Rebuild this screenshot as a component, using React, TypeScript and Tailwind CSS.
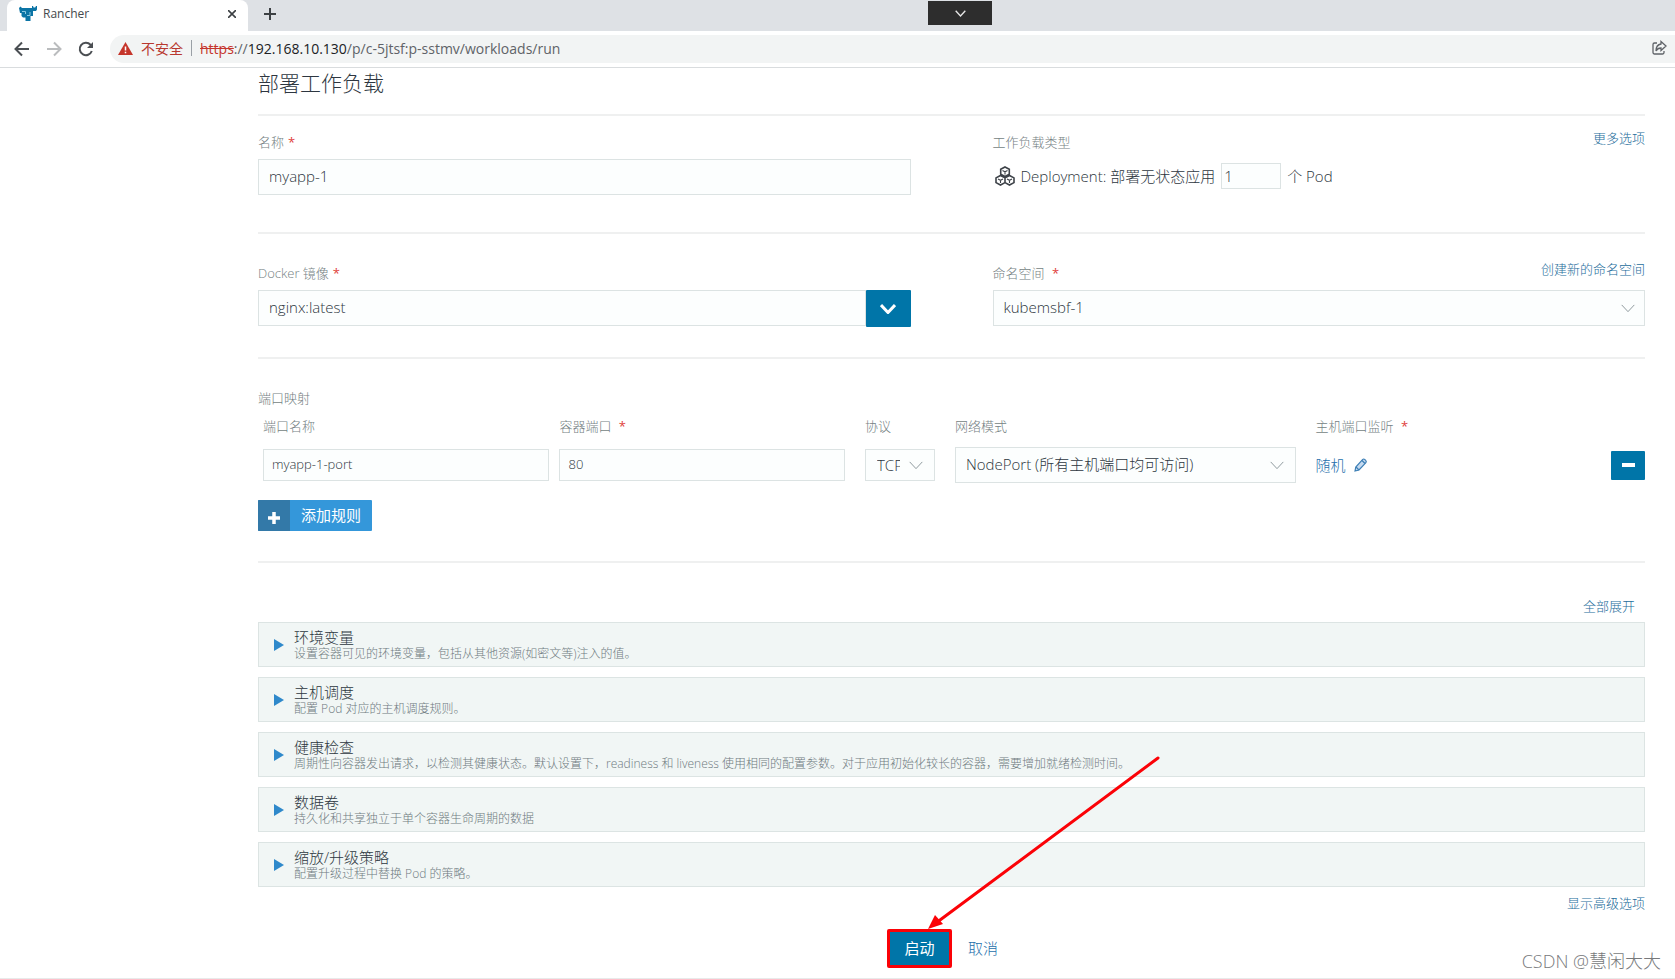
import { useState } from "react";
import type { ReactNode } from "react";

const sections = [
  { title: "环境变量", text: "设置容器可见的环境变量，包括从其他资源(如密文等)注入的值。" },
  { title: "主机调度", text: "配置 Pod 对应的主机调度规则。" },
  {
    title: "健康检查",
    text: "周期性向容器发出请求，以检测其健康状态。默认设置下，readiness 和 liveness 使用相同的配置参数。对于应用初始化较长的容器，需要增加就绪检测时间。",
  },
  { title: "数据卷", text: "持久化和共享独立于单个容器生命周期的数据" },
  { title: "缩放/升级策略", text: "配置升级过程中替换 Pod 的策略。" },
];

function Chevron({ className }: { className: string }) {
  return (
    <svg className={className} viewBox="0 0 16 10" fill="none" stroke="currentColor" aria-hidden="true">
      <path d="M1 1l7 7.5L15 1" />
    </svg>
  );
}

function Label({ htmlFor, required, children }: { htmlFor?: string; required?: boolean; children: ReactNode }) {
  return (
    <label htmlFor={htmlFor} className="flex gap-1 text-[13px] leading-[18px] text-[#757f83]">
      {children}
      {required && <span className="font-normal text-[#e0403a]">*</span>}
    </label>
  );
}

function BrowserBar() {
  return (
    <header className="font-normal">
      <div className="relative flex h-[31px] items-end bg-[#dee1e5] pl-[7px]">
        <div className="flex h-full w-[241px] items-center rounded-t-lg bg-white pr-2 pb-1 pl-3 text-[12px] text-[#45494d]">
          <svg className="mr-1.5 h-[18px] w-[18px]" viewBox="0 0 18 18" aria-hidden="true">
            <path
              d="M0 3l1.500-1.500L3 3h10V1h1l.6 1.600h1.600L17 1h1v3.500L17 6h-3v5h-2.500v5h-5v-3.500H4L2.500 11V8H1z"
              fill="#0b74a5"
            />
            <path d="M3 6.500h3.500V9M11 7v3.500H8" fill="none" stroke="#8ac6df" />
          </svg>
          <span className="flex-1">Rancher</span>
          <button aria-label="关闭标签页" className="p-1">
            <svg className="h-2 w-2" viewBox="0 0 8 8" stroke="#3c4043" strokeWidth="1.6" aria-hidden="true">
              <path d="M0 0l8 8M8 0L0 8" />
            </svg>
          </button>
        </div>
        <button aria-label="新标签页" className="ml-4 flex h-full items-center pb-1">
          <svg className="h-3 w-3" viewBox="0 0 12 12" stroke="#3c4043" strokeWidth="2" aria-hidden="true">
            <path d="M6 0v12M0 6h12" />
          </svg>
        </button>
        <button
          aria-label="展开"
          className="absolute top-px left-[928px] flex h-6 w-16 items-center justify-center bg-[#2d2d2d] text-[#e6e6e6]"
        >
          <Chevron className="h-[7px] w-[11px] stroke-2" />
        </button>
      </div>
      <div className="flex h-[37px] items-center border-b border-[#d9dcde] pl-3.5 text-[#5f6368]">
        <button aria-label="后退">
          <svg className="h-4 w-4" viewBox="0 0 16 16" fill="none" stroke="#4b4f53" strokeWidth="2" aria-hidden="true">
            <path d="M15 8H2M8 1.500L1.500 8 8 14.500" />
          </svg>
        </button>
        <button aria-label="前进" className="ml-4">
          <svg className="h-4 w-4" viewBox="0 0 16 16" fill="none" stroke="#babcbe" strokeWidth="2" aria-hidden="true">
            <path d="M1 8h13M8 1.500L14.500 8 8 14.500" />
          </svg>
        </button>
        <button aria-label="重新加载" className="ml-4">
          <svg className="h-4 w-4" viewBox="0 0 16 16" fill="none" stroke="#4b4f53" strokeWidth="2" aria-hidden="true">
            <path d="M13.800 10A6.200 6.200 0 1 1 12.500 3.700L14 5.500" />
            <path d="M15 1v6H9z" fill="#4b4f53" stroke="none" />
          </svg>
        </button>
        <div className="ml-4 flex h-7 flex-1 items-center rounded-l-full bg-[#f2f4f4] pr-2 pb-0.5 pl-2 text-[14px]">
          <svg className="mr-2 h-[13px] w-[15px]" viewBox="0 0 15 13" aria-hidden="true">
            <path d="M7.500 0L15 13H0z" fill="#c5352b" />
            <path d="M7.500 4.500v4M7.500 9.800v1.400" stroke="#fff" strokeWidth="1.500" />
          </svg>
          <span className="text-[#b8382f]">不安全</span>
          <span className="mx-2 h-4 w-px bg-[#9aa0a6]" />
          <span className="flex-1">
            <span className="text-[#c5352b] line-through">https</span>://
            <span className="text-[#202124]">192.168.10.130</span>/p/c-5jtsf:p-sstmv/workloads/run
          </span>
          <button aria-label="分享">
            <svg className="h-4 w-4" viewBox="0 0 16 16" fill="none" stroke="#5f6368" strokeWidth="1.300" aria-hidden="true">
              <path d="M6 3H3.500A1.500 1.500 0 0 0 2 4.500v8A1.500 1.500 0 0 0 3.500 14h8a1.500 1.500 0 0 0 1.500-1.500V11" />
              <path d="M10 1.500L15 6l-5 4.500V8C7.500 8 6 9 5 11c0-4 2-6.500 5-7z" />
            </svg>
          </button>
        </div>
      </div>
    </header>
  );
}

const box = "w-full border border-[#dce3e3] bg-[#fcfefe] pb-0.5 outline-none";

export default function App() {
  const [name, setName] = useState("myapp-1");
  const [replicas, setReplicas] = useState("1");
  const [image, setImage] = useState("nginx:latest");
  const [portName, setPortName] = useState("myapp-1-port");
  const [port, setPort] = useState("80");

  return (
    <div className="relative min-h-screen border-b border-[#e8eaea] bg-white font-['Open_Sans','Noto_Sans_CJK_SC',sans-serif] text-[15px] font-light text-[#2d3640]">
      <BrowserBar />

      <main className="mr-[30px] ml-[258px]">
        <h1 className="h-[46px] text-[21px] leading-[30px]">部署工作负载</h1>

        <section className="grid grid-cols-2 gap-x-[82px] border-t-2 border-[#eff0f0] pt-[17px] pb-[37px]">
          <div>
            <Label htmlFor="name" required>名称</Label>
            <input id="name" className={`${box} mt-2 h-9 px-2.5`} value={name} onChange={(e) => setName(e.target.value)} />
          </div>
          <div>
            <div className="flex justify-between text-[13px] leading-[18px]">
              <h2 className="text-[#757f83]">工作负载类型</h2>
              <a href="#more" className="-mt-1 text-[#256d9b]">更多选项</a>
            </div>
            <div className="mt-3 flex h-[26px] items-center">
              <svg className="mx-0.5 h-5 w-5" viewBox="0 0 20 20" fill="none" stroke="#3d4248" strokeWidth="1.600" aria-hidden="true">
                <path d="M10 1l4.300 2.300v4.900L10 10.500 5.700 8.200V3.300zM5.500 9.500l4.500 2.400v4.700l-4.500 2.400-4.500-2.400v-4.700zM14.500 9.500l4.500 2.400v4.700l-4.500 2.400-4.500-2.400v-4.700z" />
                <path d="M7.500 4.500L10 5.800l2.500-1.300M10 5.800v2.700M3 13l2.500 1.300L8 13M5.500 14.300V17M12 13l2.500 1.300L17 13M14.500 14.300V17" strokeWidth="1.100" />
              </svg>
              <label htmlFor="replicas" className="ml-1">Deployment: 部署无状态应用</label>
              <input
                id="replicas"
                className="mx-1.5 h-[26px] w-[60px] border border-[#dce3e3] bg-[#fcfefe] px-0.5 outline-none"
                value={replicas}
                onChange={(e) => setReplicas(e.target.value)}
              />
              <span>个 Pod</span>
            </div>
          </div>
        </section>

        <section className="grid grid-cols-2 gap-x-[82px] border-t-2 border-[#eff0f0] pt-[30px] pb-[30px]">
          <div>
            <Label htmlFor="image" required>Docker 镜像</Label>
            <div className="mt-2 flex h-[37px]">
              <input id="image" className={`${box} h-9 px-2.5`} value={image} onChange={(e) => setImage(e.target.value)} />
              <button aria-label="选择镜像" className="flex w-[45px] shrink-0 items-center justify-center rounded-[1px] bg-[#0075a8] text-white">
                <Chevron className="h-[10px] w-4 stroke-3" />
              </button>
            </div>
          </div>
          <div>
            <div className="flex justify-between text-[13px] leading-[18px]">
              <Label htmlFor="namespace" required>命名空间&nbsp;</Label>
              <a href="#namespace" className="-mt-1 text-[#256d9b]">创建新的命名空间</a>
            </div>
            <div className="relative mt-2">
              <select id="namespace" className={`${box} h-9 appearance-none px-2.5`}>
                <option>kubemsbf-1</option>
              </select>
              <Chevron className="pointer-events-none absolute top-3.5 right-[9px] h-[9px] w-4 text-[#839094]" />
            </div>
          </div>
        </section>

        <section className="border-t-2 border-[#eff0f0] pt-[30px] pb-[30px]">
          <h2 className="text-[13px] leading-[18px] text-[#757f83]">端口映射</h2>
          <div className="mt-2.5 ml-[5px] grid grid-cols-[296fr_305fr_90px_360fr_295fr_34px] gap-y-3">
            <Label htmlFor="port-name">端口名称</Label>
            <Label htmlFor="port" required>容器端口&nbsp;</Label>
            <Label htmlFor="protocol">协议</Label>
            <Label htmlFor="mode">网络模式</Label>
            <Label required>主机端口监听&nbsp;</Label>
            <span />
            <div className="flex items-center pr-2.5">
              <input id="port-name" className={`${box} h-8 px-2 text-[13px]`} value={portName} onChange={(e) => setPortName(e.target.value)} />
            </div>
            <div className="flex items-center pr-5">
              <input id="port" className={`${box} h-8 px-2 text-[13px]`} value={port} onChange={(e) => setPort(e.target.value)} />
            </div>
            <div className="relative flex items-center pr-5">
              <select id="protocol" className="h-8 w-full appearance-none border border-[#dce3e3] bg-[#fcfefe] pr-[34px] pl-[11px] outline-none">
                <option>TCP</option>
                <option>UDP</option>
              </select>
              <Chevron className="pointer-events-none absolute right-[31px] h-[9px] w-4 text-[#839094]" />
            </div>
            <div className="relative flex items-center pr-5">
              <select id="mode" className={`${box} h-9 appearance-none px-2.5`}>
                <option>NodePort (所有主机端口均可访问)</option>
              </select>
              <Chevron className="pointer-events-none absolute right-[31px] h-[9px] w-4 text-[#839094]" />
            </div>
            <a href="#random" className="flex items-center gap-2 text-[#256fab]">
              随机
              <svg className="h-3.5 w-3.5" viewBox="0 0 14 14" fill="none" stroke="#3d7fb5" strokeWidth="1.200" aria-hidden="true">
                <path d="M1 13l.8-4L8.500 1.600q1.200-1.200 2.400 0l.8.800q1.200 1.200 0 2.400L5 12z" fill="#c5daf0" />
                <path d="M8 2.500l3 3M2 9l3 3" />
              </svg>
            </a>
            <div className="flex items-center">
              <button aria-label="删除规则" className="flex h-[29px] w-full items-center justify-center rounded-[1px] bg-[#0075a8]">
                <span className="h-1 w-[13px] bg-white" />
              </button>
            </div>
          </div>
          <button className="mt-[17px] flex h-[31px] items-center rounded-[1px] bg-[#3497da] font-normal text-white">
            <span className="flex h-full w-8 items-center justify-center rounded-l-[1px] bg-[#3379a8]">
              <svg className="mt-1 h-3 w-3" viewBox="0 0 12 12" stroke="#fff" strokeWidth="3.500" aria-hidden="true">
                <path d="M6 0v12M0 6h12" />
              </svg>
            </span>
            <span className="px-[11px]">添加规则</span>
          </button>
        </section>

        <section className="border-t-2 border-[#eff0f0] pt-[33px]">
          <div className="pr-[10px] text-right text-[13px] leading-5">
            <a href="#expand" className="text-[#256d9b]">全部展开</a>
          </div>
          <div className="mt-1.5 flex flex-col gap-2.5">
            {sections.map((s) => (
              <button key={s.title} className="flex h-[45px] items-center border border-[#dce4e3] bg-[#f1f6f5] pl-[15px] text-left">
                <svg className="mr-2.5 h-3 w-[10px]" viewBox="0 0 10 12" fill="#2f89cb" aria-hidden="true">
                  <path d="M0 0l10 6-10 6z" />
                </svg>
                <span>
                  <span className="block leading-[18px]">{s.title}</span>
                  <span className="block text-[12px] leading-4 text-[#6f7a7f]">{s.text}</span>
                </span>
              </button>
            ))}
          </div>
          <div className="mt-1.5 text-right text-[13px] leading-5">
            <a href="#advanced" className="text-[#256d9b]">显示高级选项</a>
          </div>
        </section>

        <footer className="mt-4 flex items-center justify-center gap-4 pr-[18px] pb-[9px]">
          <div className="relative">
            <button className="h-[39px] w-[65px] rounded-[2px] border-3 border-[#fb0207] bg-[#0075a8] font-normal text-white">启动</button>
            <svg className="pointer-events-none absolute bottom-full left-[41px] h-[173px] w-[232px]" viewBox="0 0 232 173" aria-hidden="true">
              <path d="M230 2L8 167" stroke="#fb0207" strokeWidth="3" strokeLinecap="round" />
              <path d="M0 173l7-14 8 9z" fill="#fb0207" />
            </svg>
          </div>
          <a href="#cancel" className="text-[#256fab]">取消</a>
        </footer>
      </main>
      <p className="absolute right-[14px] bottom-[5px] text-[18px] leading-6 text-[#77797b]">CSDN @慧闲大大</p>
    </div>
  );
}
